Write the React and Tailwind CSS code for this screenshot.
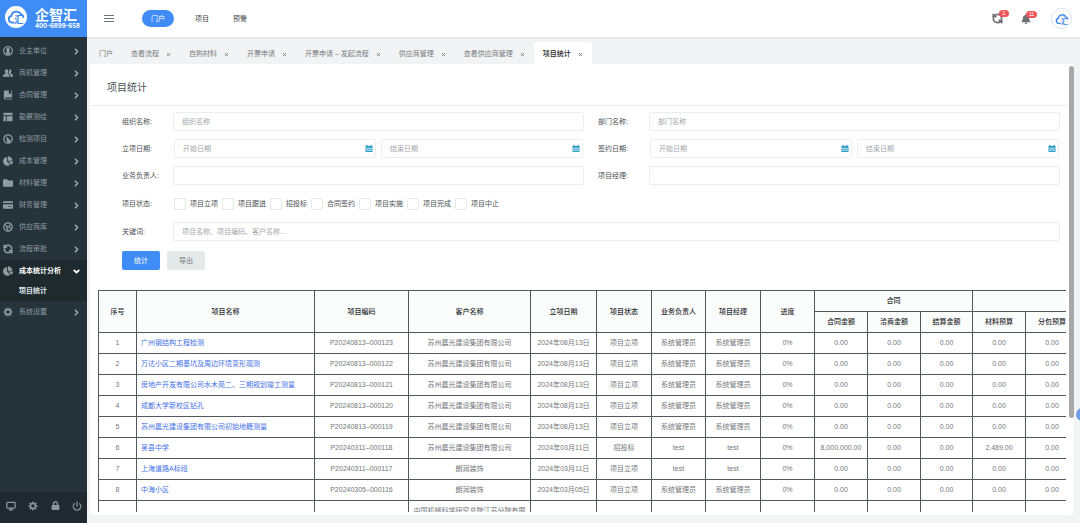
// App.jsx
import React, { useState } from "react";
import { ChevronDown, ChevronRight, Monitor, Power, RefreshCcw, X } from "lucide-react";
import { FaBell, FaChartPie, FaFolder, FaLock } from "react-icons/fa";

function UserIcon({ className }) {
  return (
    <svg viewBox="0 0 24 24" className={className} fill="currentColor" aria-hidden="true">
      <circle cx="12" cy="12" r="10.500" fill="none" stroke="currentColor" strokeWidth="2.800" />
      <path d="M12 4.500a4.500 4.500 0 0 1 3 7.800V15l4 2c-1.500 2.500-4 4-7 4s-5.500-1.500-7-4l4-2v-2.700a4.500 4.500 0 0 1 3-7.800z" />
    </svg>
  );
}

function UsersIcon({ className }) {
  return (
    <svg viewBox="0 0 24 24" className={className} fill="currentColor" aria-hidden="true">
      <path d="M8.500 3a4.500 4.500 0 0 1 3 7.500V14l4 3v4H0v-4l5.500-3v-3.500A4.500 4.500 0 0 1 8.500 3z" />
      <path d="M15 3c3.500-.5 5.500 2 5.500 4.500 0 1.500-.5 2.500-1.500 3.500v2l5 3v5h-6.500v-5l-4-3v-2.500c1.500-2 2-5 1.500-7.500z" />
    </svg>
  );
}

function BookIcon({ className }) {
  return (
    <svg viewBox="0 0 24 24" className={className} fill="currentColor" aria-hidden="true">
      <path d="M4 1h10v9l3-2 3 2V1h2v17H6a1.5 1.5 0 0 0 0 3h16v2H5a3 3 0 0 1-3-3V3a2 2 0 0 1 2-2z" />
    </svg>
  );
}

function LayoutIcon({ className }) {
  return (
    <svg viewBox="0 0 24 24" className={className} fill="currentColor" aria-hidden="true">
      <path d="M1 2h22v6H1zM1 10h6v12H1zM9 10h14v12H9z" />
    </svg>
  );
}

function GaugeIcon({ className }) {
  return (
    <svg viewBox="0 0 24 24" className={className} fill="none" stroke="currentColor" aria-hidden="true">
      <circle cx="12" cy="12" r="10" strokeWidth="3.200" />
      <path d="M8 6l9 9a4 4 0 0 1-7 4z" fill="currentColor" strokeWidth="1" />
    </svg>
  );
}

function CardIcon({ className }) {
  return (
    <svg viewBox="0 0 24 24" className={className} fill="currentColor" aria-hidden="true">
      <path d="M2 3h20a2 2 0 0 1 2 2v2H0V5a2 2 0 0 1 2-2z" />
      <path fillRule="evenodd" d="M0 10h24v9a2 2 0 0 1-2 2H2a2 2 0 0 1-2-2zM12 15h3v2h-3zM17 15h4v2h-4z" />
    </svg>
  );
}

function GlobeIcon({ className }) {
  return (
    <svg viewBox="0 0 24 24" className={className} fill="none" stroke="currentColor" aria-hidden="true">
      <circle cx="12" cy="12" r="10" strokeWidth="3" />
      <path d="M5 7l5 5 4-1 4-5M10 12l-1 4 4 5M15 13l5 3" strokeWidth="3" />
    </svg>
  );
}

function GearIcon({ className }) {
  return (
    <svg viewBox="0 0 24 24" className={className} fill="none" stroke="currentColor" aria-hidden="true">
      <circle cx="12" cy="12" r="6" strokeWidth="3.5" />
      <path
        d="M12 1v4M12 19v4M1 12h4M19 12h4M4.2 4.2l2.9 2.9M16.9 16.9l2.9 2.9M4.2 19.8l2.9-2.9M16.9 7.1l2.9-2.9"
        strokeWidth="3.5"
      />
    </svg>
  );
}

function CalendarIcon({ className }) {
  return (
    <svg viewBox="0 0 16 16" className={className} aria-hidden="true">
      <path d="M0 2h2V0h3v2h6V0h3v2h2v14H0z" fill="#2c9dc4" />
      <path d="M2 6h3v3H2zM6.500 6h3v3h-3zM11 6h3v3h-3zM2 10.500h3v3H2zM6.500 10.500h3v3h-3zM11 10.500h3v3h-3z" fill="#d9f0f7" />
    </svg>
  );
}

function CloudLogo({ className }) {
  return (
    <svg viewBox="0 0 32 32" className={className} aria-hidden="true">
      <path
        d="M12 26H8.500a6 6 0 0 1-.8-11.800A9 9 0 0 1 24.500 11a6.500 6.500 0 0 1 4.500 5"
        fill="none"
        stroke="#3a86ee"
        strokeWidth="3.200"
        strokeLinecap="round"
      />
      <text x="13" y="27" fontSize="16" fontWeight="700" fill="#3a86ee">
        汇
      </text>
    </svg>
  );
}

const menu = [
  { label: "业主单位", icon: UserIcon },
  { label: "商机管理", icon: UsersIcon },
  { label: "合同管理", icon: BookIcon },
  { label: "勘察测绘", icon: LayoutIcon },
  { label: "检测项目", icon: GaugeIcon },
  { label: "成本管理", icon: FaChartPie },
  { label: "材料管理", icon: FaFolder },
  { label: "财务管理", icon: CardIcon },
  { label: "供应商库", icon: GlobeIcon },
  { label: "流程审批", icon: RefreshCcw },
  { label: "成本统计分析", icon: FaChartPie, children: ["项目统计"] },
  { label: "系统设置", icon: GearIcon },
];

const tabs = [
  "门户",
  "查看流程",
  "自购材料",
  "开票申请",
  "开票申请 – 发起流程",
  "供应商管理",
  "查看供应商管理",
  "项目统计",
];

const statuses = ["项目立项", "项目跟进", "招投标", "合同签约", "项目实施", "项目完成", "项目中止"];

const company = "苏州晨光建设集团有限公司";
const admin = "系统管理员";

const rows = [
  ["广州钢结构工程检测", "P20240813–000123", company, "2024年08月13日", "项目立项", admin, "0.00", "0.00"],
  ["万达小区二期基坑及周边环境变形观测", "P20240813–000122", company, "2024年08月13日", "项目立项", admin, "0.00", "0.00"],
  ["房地产开发有限公司水木苑二、三期规划竣工测量", "P20240813–000121", company, "2024年08月13日", "项目立项", admin, "0.00", "0.00"],
  ["成都大学新校区钻孔", "P20240813–000120", company, "2024年08月13日", "项目立项", admin, "0.00", "0.00"],
  ["苏州晨光建设集团有限公司初始地籍测量", "P20240813–000119", company, "2024年08月13日", "项目立项", admin, "0.00", "0.00"],
  ["吴县中学", "P20240311–000118", company, "2024年03月11日", "招投标", "test", "8,000,000.00", "2,489.00"],
  ["上海道路A标段", "P20240311–000117", "朗润装饰", "2024年03月11日", "项目立项", "test", "0.00", "0.00"],
  ["中海小区", "P20240305–000116", "朗润装饰", "2024年03月05日", "项目立项", admin, "0.00", "0.00"],
];

function Sidebar() {
  return (
    <aside className="flex w-[87px] shrink-0 flex-col bg-[#26333a]">
      <div className="flex h-[37px] shrink-0 items-center gap-2 bg-[#3f8cf4] pb-[3px] pl-[5px] text-white">
        <div className="flex h-[22px] w-[22px] items-center justify-center rounded-full bg-white">
          <CloudLogo className="h-[18px] w-[18px]" />
        </div>
        <div className="pt-[3px]">
          <div className="text-[14px] leading-[15px] font-bold">企智汇</div>
          <div className="font-[Inter] text-[6px] leading-[6px] font-bold">400-6899-658</div>
        </div>
      </div>

      <nav className="flex-1 pt-[3px]">
        {menu.map((item) => {
          const Icon = item.icon;
          const open = Boolean(item.children);
          return (
            <div key={item.label} className={open ? "bg-[#1f2a2f]" : ""}>
              <button className="flex h-[22px] w-full items-center pr-1.5 pl-[3px]">
                <Icon className="h-[10px] w-[10px] shrink-0 text-[#909ca3]" strokeWidth={4} />
                <span
                  className={
                    open
                      ? "ml-1.5 flex-1 text-left font-bold text-white"
                      : "ml-1.5 flex-1 text-left text-[#909ca3]"
                  }
                >
                  {item.label}
                </span>
                {open ? (
                  <ChevronDown className="h-[9px] w-[9px] text-white" strokeWidth={5} />
                ) : (
                  <ChevronRight className="h-[9px] w-[9px] text-[#a5b0b6]" strokeWidth={4} />
                )}
              </button>
              {open &&
                item.children.map((child) => (
                  <a key={child} href="#" className="block h-[19px] pl-[19px] leading-[17px] font-bold text-[#dfe4e6]">
                    {child}
                  </a>
                ))}
            </div>
          );
        })}
      </nav>

      <div className="flex h-[31px] shrink-0 items-center justify-between bg-[#1f292f] pr-[5px] pb-1 pl-1.5 text-[#8c979d]">
        <button aria-label="桌面">
          <Monitor className="h-[10px] w-[10px]" strokeWidth={3} />
        </button>
        <button aria-label="设置">
          <GearIcon className="h-[10px] w-[10px]" />
        </button>
        <button aria-label="锁定">
          <FaLock className="h-[9px] w-[9px]" />
        </button>
        <button aria-label="退出">
          <Power className="h-[10px] w-[10px]" strokeWidth={3} />
        </button>
      </div>
    </aside>
  );
}

function Header() {
  return (
    <header className="flex h-[37px] shrink-0 items-center bg-white pr-2 pl-[17px] shadow-[0_2px_0_#e5e7e8]">
      <button aria-label="菜单" className="flex w-[10px] flex-col gap-[2px]">
        <span className="h-px bg-[#6b7075]" />
        <span className="h-px bg-[#6b7075]" />
        <span className="h-px bg-[#6b7075]" />
      </button>
      <nav className="ml-7 flex items-center leading-[17px] text-[#3f4347]">
        <a href="#" className="mr-3 rounded-full bg-[#3f8cf4] px-[9px] text-white">门户</a>
        <a href="#" className="px-[9px]">项目</a>
        <a href="#" className="ml-1.5 px-[9px]">预警</a>
      </nav>

      <div className="ml-auto flex items-center">
        <button aria-label="刷新" className="relative mr-[18px]">
          <RefreshCcw className="h-[11px] w-[11px] text-[#6d7176]" strokeWidth={4} />
          <span className="absolute -top-[3px] left-[7px] w-[10px] rounded-full bg-[#f0555a] text-center text-[5px] leading-[7px] text-white">
            2
          </span>
        </button>
        <button aria-label="通知" className="relative mr-5">
          <FaBell className="h-[10px] w-[10px] text-[#6d7176]" />
          <span className="absolute -top-[3px] left-[5px] w-[11px] rounded-full bg-[#f0555a] text-center text-[5px] leading-[7px] text-white">
            11
          </span>
        </button>
        <button aria-label="账户" className="flex h-[21px] w-[21px] items-center justify-center rounded-full border border-[#d6e3f2] bg-white">
          <CloudLogo className="h-[14px] w-[14px]" />
        </button>
      </div>
    </header>
  );
}

function TabBar() {
  return (
    <div className="flex h-[27px] shrink-0 items-end pt-[5px] text-[#777b80]">
      {tabs.map((tab) => {
        const active = tab === "项目统计";
        return (
          <div
            key={tab}
            className={
              active
                ? "flex h-[22px] items-center rounded-t-sm bg-white px-[9px] pt-0.5 font-medium text-[#222]"
                : "flex h-[22px] items-center px-[9px] pt-0.5"
            }
          >
            <a href="#">{tab}</a>
            {tab !== "门户" && (
              <button aria-label="关闭" className="ml-[7px] text-[#777b80]">
                <X className="h-[5px] w-[5px]" strokeWidth={4} />
              </button>
            )}
          </div>
        );
      })}
    </div>
  );
}

const inputStyle =
  "h-[19px] w-full min-w-0 rounded-[2px] border border-[#eceff0] bg-white px-2 text-[#555] outline-none placeholder:text-[#a3a7aa]";

function TextField({ id, label, placeholder }) {
  return (
    <div className="flex items-center">
      <label htmlFor={id} className="w-[51px] shrink-0">{label}:</label>
      <input id={id} type="text" placeholder={placeholder} className={inputStyle} />
    </div>
  );
}

function DateField({ id, label }) {
  return (
    <div className="flex items-center">
      <label htmlFor={id} className="w-[51px] shrink-0">{label}:</label>
      <div className="flex flex-1 gap-[5px] px-px">
        {["开始日期", "结束日期"].map((text, i) => (
          <div key={text} className="relative flex-1">
            <input id={i === 0 ? id : id + "-end"} aria-label={text} type="text" placeholder={text} className={inputStyle} />
            <CalendarIcon className="absolute top-1.5 right-[3px] h-[7px] w-[8px]" />
          </div>
        ))}
      </div>
    </div>
  );
}

function SearchForm() {
  const [checked, setChecked] = useState([]);

  function toggle(name) {
    setChecked((prev) => (prev.includes(name) ? prev.filter((n) => n !== name) : [...prev, name]));
  }

  return (
    <form className="shrink-0 pt-1.5 pr-[14px] pl-8 text-[#4b4f53]" onSubmit={(e) => e.preventDefault()}>
      <div className="grid grid-cols-2 gap-x-[14px] gap-y-2">
        <TextField id="org" label="组织名称" placeholder="组织名称" />
        <TextField id="dept" label="部门名称" placeholder="部门名称" />
        <DateField id="start" label="立项日期" />
        <DateField id="sign" label="签约日期" />
        <TextField id="owner" label="业务负责人" />
        <TextField id="manager" label="项目经理" />
      </div>

      <fieldset className="mt-[9px] flex h-5 items-center">
        <legend className="float-left w-[52px]">项目状态:</legend>
        <div className="flex gap-1">
          {statuses.map((name) => (
            <label key={name} className="flex items-center gap-1">
              <input
                type="checkbox"
                checked={checked.includes(name)}
                onChange={() => toggle(name)}
                className="h-3 w-3 appearance-none rounded-[2px] border border-[#e6e9ea] bg-white checked:bg-[#3f8cf4]"
              />
              {name}
            </label>
          ))}
        </div>
      </fieldset>

      <div className="mt-2">
        <TextField id="keyword" label="关键词" placeholder="项目名称、项目编码、客户名称..." />
      </div>

      <div className="mt-[10px] flex gap-[7px]">
        <button type="submit" className="h-[19px] w-[38px] rounded-[2px] bg-[#3f8cf4] text-white">统计</button>
        <button type="button" className="h-[19px] w-[38px] rounded-[2px] bg-[#e4e9ea] text-[#777b80]">导出</button>
      </div>
    </form>
  );
}

function ProjectTable() {
  const th = "border border-[#55585a] px-1 py-[3px] font-medium text-[#2b2e30]";
  const td = "border border-[#55585a] px-1 py-[3px]";

  return (
    <div className="mt-5 mr-2 ml-2 min-h-0 flex-1 overflow-hidden">
      <table className="w-full min-w-[981px] table-fixed border-collapse text-center leading-[14px] text-[#74777a]">
        <colgroup>
          <col className="w-[38px]" />
          <col />
          <col className="w-[94px]" />
          <col className="w-[122px]" />
          <col className="w-[66px]" />
          <col className="w-[55px]" />
          <col className="w-[54px]" />
          <col className="w-[55px]" />
          <col className="w-[54px]" />
          <col className="w-[53px]" />
          <col className="w-[53px]" />
          <col className="w-[52px]" />
          <col className="w-[53px]" />
          <col className="w-[53px]" />
        </colgroup>
        <thead className="bg-[#fbfcfc]">
          <tr>
            {["序号", "项目名称", "项目编码", "客户名称", "立项日期", "项目状态", "业务负责人", "项目经理", "进度"].map((h) => (
              <th key={h} rowSpan={2} className={th}>{h}</th>
            ))}
            <th colSpan={3} className={th}>合同</th>
            <th colSpan={2} className={th}></th>
          </tr>
          <tr>
            {["合同金额", "洽商金额", "结算金额", "材料预算", "分包预算"].map((h) => (
              <th key={h} className={th}>{h}</th>
            ))}
          </tr>
        </thead>
        <tbody>
          {rows.map(([name, code, customer, date, status, owner, amount, budget], i) => (
            <tr key={code}>
              <td className={td}>{i + 1}</td>
              <td className={td + " text-left"}>
                <a href="#" className="text-[#3f6fe8]">{name}</a>
              </td>
              <td className={td}>{code}</td>
              <td className={td}>{customer}</td>
              <td className={td}>{date}</td>
              <td className={td}>{status}</td>
              <td className={td}>{owner}</td>
              <td className={td}>{owner}</td>
              <td className={td}>0%</td>
              <td className={td}>{amount}</td>
              <td className={td}>0.00</td>
              <td className={td}>0.00</td>
              <td className={td}>{budget}</td>
              <td className={td}>0.00</td>
            </tr>
          ))}
          <tr>
            <td className={td}></td>
            <td className={td}></td>
            <td className={td}></td>
            <td className={td}>中国机械科学研究总院江苏分院有限公司</td>
            {Array.from({ length: 10 }, (_, i) => (
              <td key={i} className={td}></td>
            ))}
          </tr>
        </tbody>
      </table>
    </div>
  );
}

export default function App() {
  return (
    <div className="relative flex h-screen overflow-hidden bg-[#f1f3f4] font-['Liberation_Sans','Noto_Sans_CJK_SC',sans-serif] text-[7px] leading-[10px]">
      <Sidebar />
      <div className="flex min-w-0 flex-1 flex-col">
        <Header />
        <div className="flex min-h-0 flex-1 flex-col pr-1.5 pb-2 pl-[3px]">
          <TabBar />
          <main className="relative flex min-h-0 flex-1 flex-col overflow-hidden rounded-b bg-white pb-[3px]">
            <h1 className="shrink-0 border-b border-[#eceeef] pt-4 pb-[10px] pl-[17px] text-[10px] leading-[15px] text-[#4b4f53]">
              项目统计
            </h1>
            <SearchForm />
            <ProjectTable />
            <div className="absolute top-[2px] right-0 h-[78%] w-[5px] rounded-full bg-[#a8a8a8]" />
          </main>
        </div>
      </div>
      <button
        aria-label="助手"
        className="absolute top-[408px] -right-[9px] h-[13px] w-[13px] rounded-full bg-[#6d9bea]"
      />
    </div>
  );
}
